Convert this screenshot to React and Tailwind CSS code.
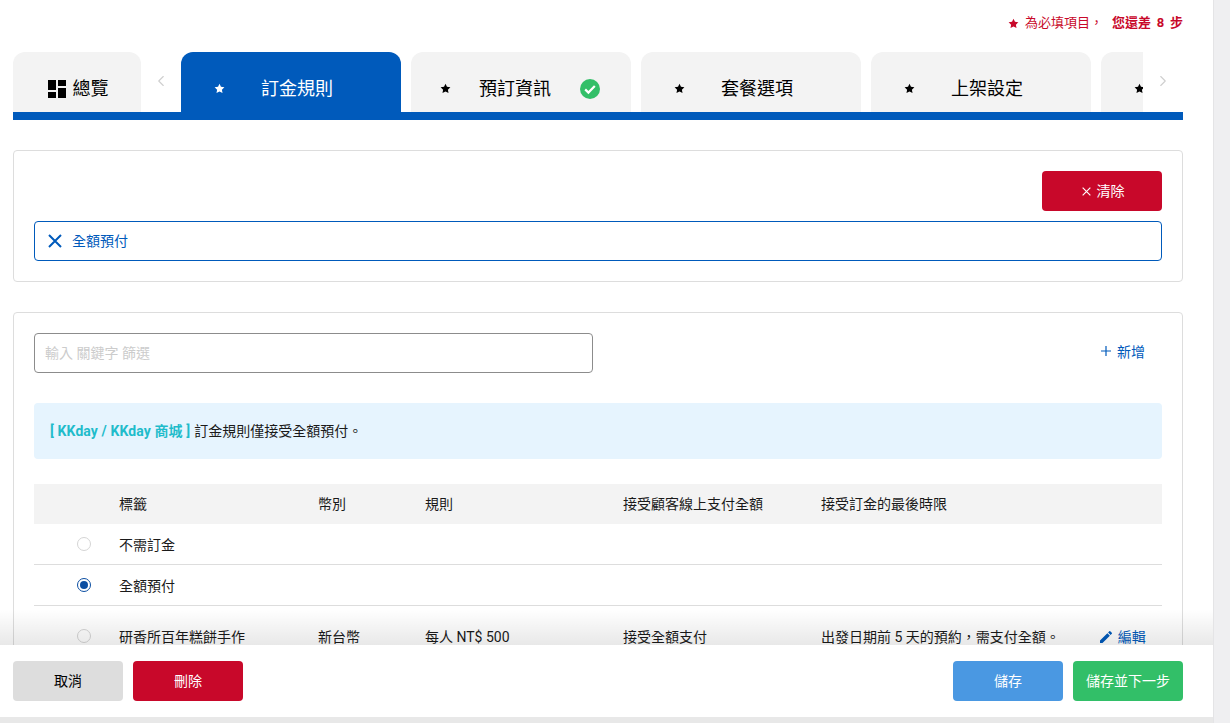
import React from 'react';
import { ChevronLeft, ChevronRight } from 'lucide-react';
import { MdEdit } from 'react-icons/md';

const Star = ({ className }) => (
  <svg viewBox="0 0 24 24" className={className} fill="currentColor">
    <path d="M12 1.5l3.2 6.9 7.5.9-5.5 5.2 1.4 7.5L12 18.4l-6.6 3.6 1.4-7.5L1.3 9.3l7.5-.9z" />
  </svg>
);

const Cross = ({ className, width = 2 }) => (
  <svg viewBox="0 0 14 14" className={className} fill="none" stroke="currentColor" strokeWidth={width}>
    <path d="M1 1l12 12M13 1L1 13" />
  </svg>
);

const OverviewIcon = () => (
  <svg viewBox="0 0 18 18" className="w-[18px] h-[18px]" fill="#000">
    <rect x="0" y="0" width="8" height="10" />
    <rect x="10" y="0" width="8" height="6" />
    <rect x="0" y="12" width="8" height="6" />
    <rect x="10" y="8" width="8" height="10" />
  </svg>
);

const CheckBadge = () => (
  <svg viewBox="0 0 20 20" className="w-5 h-5">
    <circle cx="10" cy="10" r="10" fill="#32bf68" />
    <path d="M5.2 10.4l3.2 3.2 6.4-6.6" fill="none" stroke="#fff" strokeWidth="2.2" />
  </svg>
);

const Tab = ({ label, active, check }) => (
  <div className={`w-[220px] h-[60px] shrink-0 rounded-t-xl flex items-center pt-[13px] ${check ? 'pl-[29px]' : 'pl-[33px]'} ${active ? 'bg-[#005abb] text-white' : 'bg-[#f3f3f3] text-black'}`}>
    <Star className="w-[11px] h-[11px] shrink-0" />
    {label && <span className={`text-[18px] leading-6 ${check ? 'ml-[28px]' : 'ml-[36px]'}`}>{label}</span>}
    {check && <span className="ml-[29px]"><CheckBadge /></span>}
  </div>
);

const Radio = ({ checked }) => (
  <span className={`ml-[43px] mb-[2px] w-[14px] h-[14px] rounded-full border bg-white flex items-center justify-center ${checked ? 'border-[#0b4ea2] border-[1.5px]' : 'border-[#d5d5d5]'}`}>
    {checked && <span className="block w-[8px] h-[8px] rounded-full bg-[#0b4ea2]" />}
  </span>
);

const tableCols = 'grid grid-cols-[85px_199px_107px_198px_198px_1fr] items-center';

const App = () => {
  return (
    <div className="flex h-[723px] w-[1230px] overflow-hidden bg-[#efeff1] text-[14px] text-[#1a1a1a] font-['Roboto','Noto_Sans_CJK_TC',sans-serif]">
      <div className="w-[1213px] shrink-0 flex flex-col">
        <div className="relative h-[645px] bg-white overflow-hidden pl-[13px] pr-[30px]">
          {/* 必填提示 */}
          <div className="flex justify-end items-center gap-[9px] h-[46px] text-[13px] text-[#c8082a]">
            <span className="flex items-center gap-[6px]">
              <Star className="w-[11px] h-[11px]" />
              為必填項目，
            </span>
            <span className="font-bold [word-spacing:2.5px]">您還差 8 步</span>
          </div>

          {/* 頁籤 */}
          <div className="mt-[6px] h-[68px] border-b-[8px] border-[#005abb] flex items-start">
            <div className="w-[128px] h-[60px] shrink-0 rounded-t-xl bg-[#f3f3f3] flex items-center justify-center gap-[7px] pt-[13px] pl-[2px]">
              <OverviewIcon />
              <span className="text-[18px] leading-6 text-black">總覽</span>
            </div>
            <div className="w-[40px] h-[60px] shrink-0 flex items-center justify-center pb-[2px] text-[#cfcfcf]">
              <ChevronLeft className="w-[18px] h-[18px]" strokeWidth={1.5} />
            </div>
            <div className="relative flex-1 min-w-0 h-[68px] overflow-hidden">
              <div className="flex gap-[10px]">
                <Tab label="訂金規則" active />
                <Tab label="預訂資訊" check />
                <Tab label="套餐選項" />
                <Tab label="上架設定" />
                <Tab />
              </div>
              <div className="absolute right-0 top-0 w-[40px] h-[60px] bg-white flex items-center justify-center pb-[2px] text-[#cfcfcf]">
                <ChevronRight className="w-[18px] h-[18px]" strokeWidth={1.5} />
              </div>
            </div>
          </div>

          {/* 已選項目 */}
          <div className="mt-[30px] h-[132px] border border-[#dddddd] rounded-[4px] px-[20px] pt-[20px]">
            <div className="flex justify-end">
              <button className="w-[120px] h-[40px] bg-[#c8082a] text-white rounded-[4px] flex items-center justify-center gap-[6px] pl-[2px]">
                <Cross className="w-[9px] h-[9px]" width={1.8} />
                清除
              </button>
            </div>
            <div className="mt-[10px] h-[40px] border border-[#005abb] rounded-[4px] flex items-center pl-[13px] gap-[10px] text-[#005abb]">
              <Cross className="w-[14px] h-[14px]" />
              全額預付
            </div>
          </div>

          {/* 訂金規則列表 */}
          <div className="mt-[30px] h-[400px] border border-[#dddddd] rounded-[4px] px-[20px] pt-[20px]">
            <div className="flex items-center justify-between">
              <div className="w-[559px] h-[40px] border border-[#8c8c8c] rounded-[4px] flex items-center px-[10px] text-[#cccccc]">
                輸入 關鍵字 篩選
              </div>
              <button className="flex items-center gap-[6px] pr-[17px] mb-[2px] text-[#005abb]">
                <svg viewBox="0 0 10 10" className="w-[10px] h-[10px] mb-[2px]" fill="currentColor">
                  <path d="M4.4 0h1.2v4.4H10v1.2H5.6V10H4.4V5.6H0V4.4h4.4z" />
                </svg>
                新增
              </button>
            </div>

            <div className="mt-[30px] h-[56px] bg-[#e6f4fe] rounded-[4px] flex items-center px-[16px]">
              <span className="font-bold text-[#1fbccb] mr-[4px] tracking-[0.1px]">[ KKday / KKday 商城 ]</span>
              訂金規則僅接受全額預付。
            </div>

            <div className={`${tableCols} mt-[25px] h-[40px] bg-[#f3f3f3]`}>
              <span />
              <span>標籤</span>
              <span>幣別</span>
              <span>規則</span>
              <span>接受顧客線上支付全額</span>
              <span>接受訂金的最後時限</span>
            </div>
            <div className={`${tableCols} h-[41px] pt-[2px] border-b border-[#dddddd]`}>
              <Radio />
              <span>不需訂金</span>
            </div>
            <div className={`${tableCols} h-[41px] pt-[2px] border-b border-[#dddddd]`}>
              <Radio checked />
              <span>全額預付</span>
            </div>
            <div className={`${tableCols} h-[62px]`}>
              <Radio />
              <span>研香所百年糕餅手作</span>
              <span>新台幣</span>
              <span>每人 NT$ 500</span>
              <span>接受全額支付</span>
              <span className="flex items-center whitespace-nowrap">
                出發日期前 5 天的預約，需支付全額。
                <span className="ml-[38px] flex items-center gap-[4px] text-[#005abb]">
                  <MdEdit className="w-[16px] h-[16px]" />
                  編輯
                </span>
              </span>
            </div>
          </div>

          {/* 底部列上方的陰影 */}
          <div className="absolute left-0 right-0 bottom-0 h-[36px] pointer-events-none bg-gradient-to-b from-transparent to-[#00000017]" />
        </div>

        {/* 底部按鈕 */}
        <div className="h-[72px] bg-white pl-[13px] pr-[30px] flex items-center justify-between">
          <div className="flex gap-[10px]">
            <button className="w-[110px] h-[40px] rounded-[4px] bg-[#dddddd] text-black">取消</button>
            <button className="w-[110px] h-[40px] rounded-[4px] bg-[#c8082a] text-white">刪除</button>
          </div>
          <div className="flex gap-[10px]">
            <button className="w-[110px] h-[40px] rounded-[4px] bg-[#4a98e2] text-white">儲存</button>
            <button className="w-[110px] h-[40px] rounded-[4px] bg-[#32bf68] text-white">儲存並下一步</button>
          </div>
        </div>
        <div className="h-[6px] bg-[#e8e8e8]" />
      </div>
      <div className="w-[17px] shrink-0 bg-[#efeff1] border-l border-[#e4e4e6]" />
    </div>
  );
};

export default App;
